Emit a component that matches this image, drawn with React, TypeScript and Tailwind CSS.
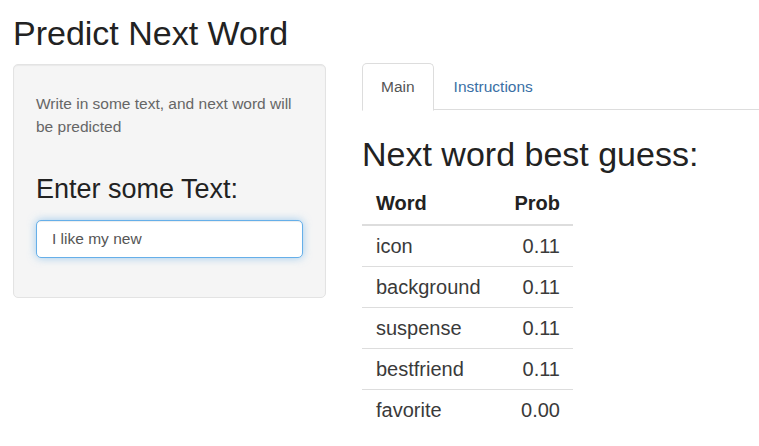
import { useState } from "react";

type Row = { word: string; prob: string };

const ROWS: Row[] = [
  { word: "icon", prob: "0.11" },
  { word: "background", prob: "0.11" },
  { word: "suspense", prob: "0.11" },
  { word: "bestfriend", prob: "0.11" },
  { word: "favorite", prob: "0.00" },
];

export default function App() {
  const [text, setText] = useState("I like my new");
  const [tab, setTab] = useState<"main" | "instructions">("main");

  return (
    <div className="w-[759px] h-[446px] overflow-hidden bg-white text-[#333] font-['Liberation_Sans',Arial,sans-serif]">
      <div className="pl-[13px]">
        <h2 className="pt-[14px] text-[34px] leading-[38px] font-normal text-[#222]">Predict Next Word</h2>

        <div className="flex mt-[12px]">
          {/* sidebar */}
          <div className="w-[313px] shrink-0">
            <div className="rounded-[5px] border border-[#e3e3e3] bg-[#f5f5f5] shadow-[inset_0_1px_1px_rgba(0,0,0,0.05)] px-[22px] pt-[27px] pb-[39px]">
              <p className="text-[15.5px] leading-[23px] text-[#666]">
                Write in some text, and next word will be predicted
              </p>
              <label className="block mt-[36px] text-[27px] leading-[30px] text-[#222]">Enter some Text:</label>
              <input
                value={text}
                onChange={(e) => setText(e.target.value)}
                autoFocus
                className="mt-[16px] block w-[267px] h-[38px] rounded-[5px] border border-[#66afe9] bg-white px-[15px] text-[15.5px] text-[#555] caret-[#333] outline-none shadow-[inset_0_1px_1px_rgba(0,0,0,0.075),0_0_8px_rgba(102,175,233,0.6)]"
              />
            </div>
          </div>

          {/* main */}
          <div className="ml-[36px] flex-1 -mt-[1px]">
            <div className="flex h-[47px] border-b border-[#ddd]">
              <button
                onClick={() => setTab("main")}
                className={
                  tab === "main"
                    ? "h-[48px] px-[18px] rounded-t-[5px] border border-[#ddd] border-b-white bg-white text-[15.5px] text-[#555]"
                    : "h-[47px] px-[18px] text-[15.5px] text-[#337ab7]"
                }
              >
                Main
              </button>
              <button
                onClick={() => setTab("instructions")}
                className={
                  tab === "instructions"
                    ? "h-[48px] px-[20px] rounded-t-[5px] border border-[#ddd] border-b-white bg-white text-[15.5px] text-[#555]"
                    : "h-[47px] px-[20px] text-[15.5px] text-[#3a6fa5]"
                }
              >
                Instructions
              </button>
            </div>

            <h2 className="mt-[25px] text-[34px] leading-[38px] font-normal text-[#222]">Next word best guess:</h2>

            <table className="mt-[8px] w-[211px] border-collapse text-[20px] text-[#3a3a3a]">
              <thead>
                <tr className="h-[44px] border-b-2 border-[#ddd]">
                  <th className="pl-[14px] text-left font-bold text-[#222]">Word</th>
                  <th className="pr-[13px] text-right font-bold text-[#222]">Prob</th>
                </tr>
              </thead>
              <tbody>
                {ROWS.map((r) => (
                  <tr key={r.word} className="h-[41px] border-t border-[#ddd] first:border-t-0">
                    <td className="pl-[14px]">{r.word}</td>
                    <td className="pr-[13px] text-right">{r.prob}</td>
                  </tr>
                ))}
              </tbody>
            </table>
          </div>
        </div>
      </div>
    </div>
  );
}
